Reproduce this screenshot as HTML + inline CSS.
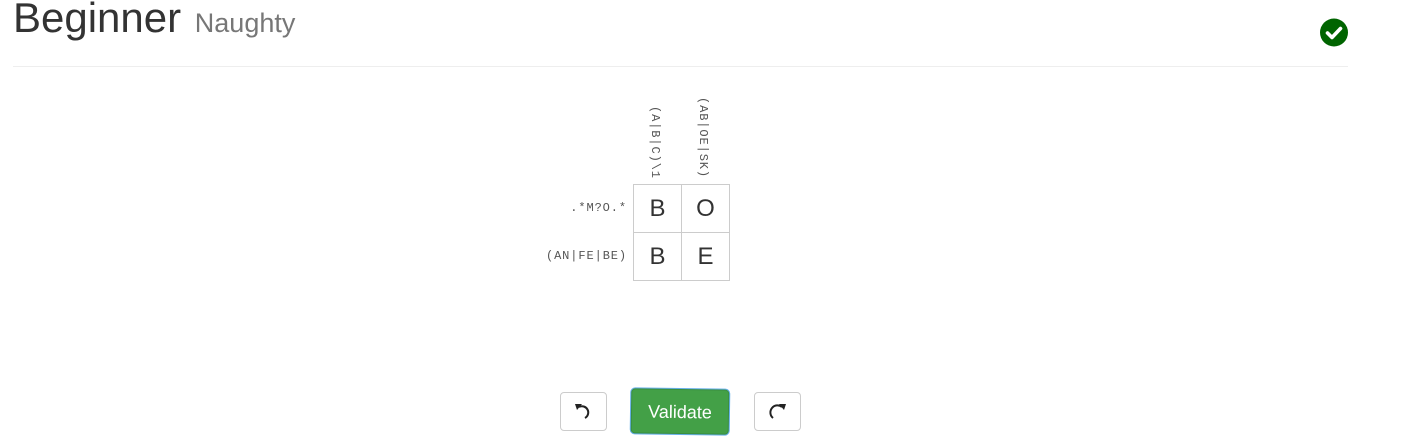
<!DOCTYPE html>
<html><head><style>
body{margin:0;width:1408px;height:444px;background:#fff;font-family:"Liberation Sans",sans-serif;position:relative;overflow:hidden}
.a{position:absolute}
.mono{font-family:"Liberation Mono",monospace;font-size:12px;color:#555;letter-spacing:0.9px}
.cell{position:absolute;width:47px;height:47px;border:1px solid #ccc;font-size:24px;color:#333;text-align:center;line-height:47px;box-sizing:content-box}
.btn{position:absolute;border:1px solid #ccc;border-radius:4px;background:#fff;box-sizing:border-box}
</style></head><body>
<div class="a" style="left:13px;top:-6px;font-size:42px;color:#333;white-space:nowrap">Beginner <span style="font-size:27px;color:#777;margin-left:2px">Naughty</span></div>
<svg class="a" style="left:1319px;top:18px" width="30" height="30" viewBox="0 0 30 30"><circle cx="15" cy="14.5" r="14" fill="#006400"/><path d="M8.5 15 L13 19.5 L21.5 10.5" stroke="#fff" stroke-width="3.6" fill="none" stroke-linecap="round" stroke-linejoin="round"/></svg>
<div class="a" style="left:13px;top:66px;width:1335px;height:1px;background:#eee"></div>
<div class="a mono" style="left:648px;top:106px;writing-mode:vertical-rl;white-space:nowrap">(A|B|C)\1</div>
<div class="a mono" style="left:696px;top:97px;writing-mode:vertical-rl;white-space:nowrap">(AB|OE|SK)</div>
<div class="a mono" style="left:500px;top:201px;width:127px;text-align:right">.*M?O.*</div>
<div class="a mono" style="left:500px;top:249px;width:127px;text-align:right">(AN|FE|BE)</div>
<div class="cell" style="left:633px;top:184px">B</div>
<div class="cell" style="left:681px;top:184px">O</div>
<div class="cell" style="left:633px;top:232px">B</div>
<div class="cell" style="left:681px;top:232px">E</div>
<div class="btn" style="left:560px;top:392px;width:47px;height:39px"><svg width="45" height="37" viewBox="0 0 45 37"><path d="M18 14 A6 6 0 1 1 24 25" stroke="#222" stroke-width="2" fill="none"/><path d="M14 11 L21 11 L16 17 Z" fill="#222"/></svg></div>
<div class="a" style="left:631px;top:389px;width:98px;height:45px;background:#43a047;border:1px solid #3b8e3f;border-radius:4px;box-shadow:0 0 0 1px #66afe9;transform:rotate(0.8deg);color:#fff;font-size:18px;text-align:center;line-height:44px;box-sizing:border-box">Validate</div>
<div class="btn" style="left:754px;top:392px;width:47px;height:39px"><svg width="45" height="37" viewBox="0 0 45 37"><path d="M27 14 A6 6 0 1 0 18 25" stroke="#222" stroke-width="2" fill="none"/><path d="M31 11 L24 11 L29 17 Z" fill="#222"/></svg></div>
</body></html>
